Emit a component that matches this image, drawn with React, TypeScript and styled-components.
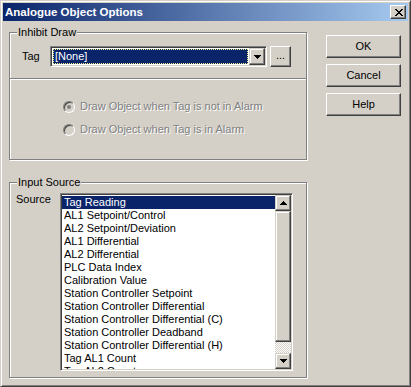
import React from "react";
import styled, { createGlobalStyle } from "styled-components";

const FACE = "#d4d0c8";
const SHADOW = "#808080";
const DARK = "#404040";
const HILITE = "#0a246a";

const GlobalStyle = createGlobalStyle`
  html, body { margin: 0; padding: 0; background: ${FACE}; }
  body {
    font-family: "Liberation Sans", Arial, sans-serif;
    font-size: 11px;
    color: #000;
  }
  * { box-sizing: border-box; }
`;

const sources = [
  "Tag Reading",
  "AL1 Setpoint/Control",
  "AL2 Setpoint/Deviation",
  "AL1 Differential",
  "AL2 Differential",
  "PLC Data Index",
  "Calibration Value",
  "Station Controller Setpoint",
  "Station Controller Differential",
  "Station Controller Differential (C)",
  "Station Controller Deadband",
  "Station Controller Differential (H)",
  "Tag AL1 Count",
  "Tag AL2 Count",
];

const CloseGlyph = () => (
  <svg width="8" height="7" viewBox="0 0 8 7" shapeRendering="crispEdges">
    <path
      fill="#000"
      d="M0 0h2v1h-2z M6 0h2v1h-2z M1 1h2v1h-2z M5 1h2v1h-2z M2 2h4v1h-4z M3 3h2v1h-2z M2 4h4v1h-4z M1 5h2v1h-2z M5 5h2v1h-2z M0 6h2v1h-2z M6 6h2v1h-2z"
    />
  </svg>
);

const Arrow = ({ up }: { up?: boolean }) => (
  <svg width="7" height="4" viewBox="0 0 7 4" shapeRendering="crispEdges">
    <path
      fill="#000"
      d={up ? "M3 0h1v1h-1z M2 1h3v1h-3z M1 2h5v1h-5z M0 3h7v1h-7z" : "M0 0h7v1h-7z M1 1h5v1h-5z M2 2h3v1h-3z M3 3h1v1h-1z"}
    />
  </svg>
);

export default function App() {
  return (
    <>
      <GlobalStyle />
      <Window>
        <TitleBar>
          <TitleText>Analogue Object Options</TitleText>
          <CloseButton>
            <CloseGlyph />
          </CloseButton>
        </TitleBar>
        <Body>
          <LeftColumn>
            <GroupBox $height={128}>
              <GroupLabel>Inhibit Draw</GroupLabel>
              <TagRow>
                <FieldLabel $width={28}>Tag</FieldLabel>
                <ComboBox>
                  <ComboValue>
                    <Selection>[None]</Selection>
                  </ComboValue>
                  <DropButton>
                    <Arrow />
                  </DropButton>
                </ComboBox>
                <DotsButton>...</DotsButton>
              </TagRow>
              <Separator />
              <RadioList>
                <RadioRow>
                  <Radio $checked />
                  <DisabledText>Draw Object when Tag is not in Alarm</DisabledText>
                </RadioRow>
                <RadioRow>
                  <Radio />
                  <DisabledText>Draw Object when Tag is in Alarm</DisabledText>
                </RadioRow>
              </RadioList>
            </GroupBox>
            <GroupBox $height={196} $gap={22}>
              <GroupLabel>Input Source</GroupLabel>
              <SourceRow>
                <FieldLabel $width={44}>Source</FieldLabel>
                <ListBox>
                  <ListItems>
                    {sources.map((s, i) => (
                      <ListItem key={s} $selected={i === 0}>
                        {s}
                      </ListItem>
                    ))}
                  </ListItems>
                  <ScrollBar>
                    <ScrollButton>
                      <Arrow up />
                    </ScrollButton>
                    <Thumb />
                    <Track />
                    <ScrollButton>
                      <Arrow />
                    </ScrollButton>
                  </ScrollBar>
                </ListBox>
              </SourceRow>
            </GroupBox>
          </LeftColumn>
          <ButtonColumn>
            <PushButton>OK</PushButton>
            <PushButton>Cancel</PushButton>
            <PushButton>Help</PushButton>
          </ButtonColumn>
        </Body>
      </Window>
    </>
  );
}

const raised = `
  background: ${FACE};
  border: 1px solid;
  border-color: #fff ${DARK} ${DARK} #fff;
  box-shadow: inset -1px -1px 0 ${SHADOW}, inset 1px 1px 0 ${FACE};
`;

const sunken = `
  border: 1px solid;
  border-color: ${SHADOW} #fff #fff ${SHADOW};
  box-shadow: inset 1px 1px 0 ${DARK}, inset -1px -1px 0 ${FACE};
`;

const Window = styled.div`
  width: 411px;
  height: 387px;
  background: ${FACE};
  border: 1px solid;
  border-color: ${FACE} ${DARK} ${DARK} ${FACE};
  box-shadow: inset 1px 1px 0 #fff, inset -1px -1px 0 ${SHADOW};
  padding: 2px;
  display: flex;
  flex-direction: column;
`;

const TitleBar = styled.div`
  height: 18px;
  flex: none;
  display: flex;
  align-items: center;
  justify-content: space-between;
  padding: 0 2px;
  background: linear-gradient(to right, ${HILITE}, #a6caf0);
`;

const TitleText = styled.span`
  color: #fff;
  font-weight: bold;
  font-size: 11.5px;
  line-height: 14px;
`;

const CloseButton = styled.div`
  width: 16px;
  height: 14px;
  ${raised}
  display: flex;
  align-items: center;
  justify-content: center;
  padding-left: 1px;
`;

const Body = styled.div`
  display: flex;
  align-items: flex-start;
  padding: 11px 0 0 6px;
`;

const LeftColumn = styled.div`
  width: 298px;
  display: flex;
  flex-direction: column;
`;

const GroupBox = styled.div<{ $height: number; $gap?: number }>`
  position: relative;
  height: ${(p) => p.$height}px;
  margin-top: ${(p) => p.$gap ?? 0}px;
  border: 1px solid ${SHADOW};
  box-shadow: 1px 1px 0 #fff, inset 1px 1px 0 #fff;
`;

const GroupLabel = styled.span`
  position: absolute;
  top: -7px;
  left: 7px;
  padding: 0 1px;
  line-height: 13px;
  background: ${FACE};
`;

const TagRow = styled.div`
  display: flex;
  align-items: center;
  margin-top: 13px;
  padding-left: 12px;
`;

const FieldLabel = styled.span<{ $width: number }>`
  width: ${(p) => p.$width}px;
  flex: none;
  line-height: 13px;
`;

const ComboBox = styled.div`
  width: 217px;
  height: 21px;
  ${sunken}
  background: #fff;
  display: flex;
  padding: 1px;
`;

const ComboValue = styled.div`
  flex: 1;
  padding: 1px;
  display: flex;
`;

const Selection = styled.div`
  flex: 1;
  background: ${HILITE};
  color: #fff;
  border: 1px dotted #f0f08c;
  line-height: 13px;
  padding-left: 1px;
`;

const DropButton = styled.div`
  width: 16px;
  flex: none;
  ${raised}
  border-color: ${FACE} ${DARK} ${DARK} ${FACE};
  box-shadow: inset -1px -1px 0 ${SHADOW}, inset 1px 1px 0 #fff;
  display: flex;
  align-items: center;
  justify-content: center;
`;

const DotsButton = styled.div`
  width: 21px;
  height: 21px;
  margin-left: 3px;
  ${raised}
  display: flex;
  align-items: center;
  justify-content: center;
  line-height: 13px;
  padding-bottom: 3px;
`;

const Separator = styled.div`
  margin-top: 11px;
  border-top: 1px solid ${SHADOW};
  border-bottom: 1px solid #fff;
`;

const RadioList = styled.div`
  margin-top: 20px;
  padding-left: 53px;
  display: flex;
  flex-direction: column;
  gap: 10px;
`;

const RadioRow = styled.div`
  display: flex;
  align-items: center;
  height: 13px;
`;

const Radio = styled.span<{ $checked?: boolean }>`
  position: relative;
  width: 12px;
  height: 12px;
  flex: none;
  border-radius: 50%;
  border: 1px solid;
  border-color: ${SHADOW} #fff #fff ${SHADOW};
  box-shadow: inset 1px 1px 0 ${DARK}, inset -1px -1px 0 ${FACE};
  background: ${FACE};
  margin-right: 5px;
  &::after {
    content: "";
    display: ${(p) => (p.$checked ? "block" : "none")};
    position: absolute;
    left: 3px;
    top: 3px;
    width: 4px;
    height: 4px;
    border-radius: 50%;
    background: ${SHADOW};
  }
`;

const DisabledText = styled.span`
  color: ${SHADOW};
  text-shadow: 1px 1px 0 #fff;
  line-height: 13px;
`;

const SourceRow = styled.div`
  display: flex;
  align-items: flex-start;
  padding: 10px 0 0 6px;
`;

const ListBox = styled.div`
  width: 233px;
  height: 178px;
  ${sunken}
  background: #fff;
  padding: 1px;
  display: flex;
`;

const ListItems = styled.div`
  flex: 1;
  overflow: hidden;
  padding-top: 1px;
`;

const ListItem = styled.div<{ $selected?: boolean }>`
  height: 13px;
  line-height: 13px;
  padding-left: 2px;
  white-space: nowrap;
  background: ${(p) => (p.$selected ? HILITE : "transparent")};
  color: ${(p) => (p.$selected ? "#fff" : "#000")};
`;

const ScrollBar = styled.div`
  width: 16px;
  flex: none;
  display: flex;
  flex-direction: column;
`;

const ScrollButton = styled.div`
  height: 16px;
  flex: none;
  background: ${FACE};
  border: 1px solid;
  border-color: ${FACE} ${DARK} ${DARK} ${FACE};
  box-shadow: inset -1px -1px 0 ${SHADOW}, inset 1px 1px 0 #fff;
  display: flex;
  align-items: center;
  justify-content: center;
`;

const Thumb = styled(ScrollButton)`
  height: 131px;
`;

const Track = styled.div`
  flex: 1;
  background: repeating-conic-gradient(${FACE} 0 25%, #fff 0 50%) 0 0 / 2px 2px;
`;

const ButtonColumn = styled.div`
  margin: 3px 0 0 19px;
  display: flex;
  flex-direction: column;
  gap: 6px;
`;

const PushButton = styled.div`
  width: 75px;
  height: 23px;
  ${raised}
  display: flex;
  align-items: center;
  justify-content: center;
  line-height: 13px;
`;
